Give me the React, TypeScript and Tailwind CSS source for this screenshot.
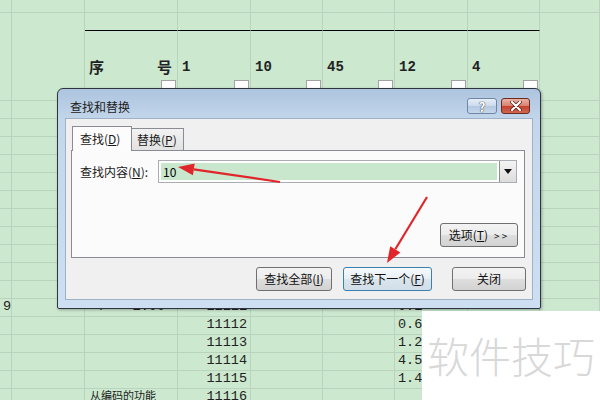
import React from "react";

const cols = [12, 73, 93, 73, 72, 72, 73, 72, 60];

type Row = { h: number; cells?: Record<number, React.ReactNode> };

const num = (t: string) => <span className="block w-full text-right pr-[3px]">{t}</span>;
const left = (t: string) => <span className="block pl-[3px]">{t}</span>;

const rows: Row[] = [
  { h: 13 },
  { h: 18 },
  { h: 70 },
  ...Array.from({ length: 11 }, () => ({ h: 18 })),
  {
    h: 18,
    cells: {
      0: left("9"),
      2: (
        <span className="flex w-full justify-between pl-[12px] pr-[12px]">
          <span>¥</span>
          <span>1.00</span>
        </span>
      ),
      3: num("11111"),
      6: left("0.1"),
    },
  },
  { h: 18, cells: { 3: num("11112"), 6: left("0.6") } },
  { h: 18, cells: { 3: num("11113"), 6: left("1.2") } },
  { h: 18, cells: { 3: num("11114"), 6: left("4.5") } },
  { h: 18, cells: { 3: num("11115"), 6: left("1.4") } },
  { h: 18, cells: { 2: <span className="pl-[5px] text-[11px]">从编码的功能</span>, 3: num("11116") } },
];

const header = ["", "", "", "1", "10", "45", "12", "4", ""];

function Sheet() {
  return (
    <div className="flex flex-col font-['Liberation_Mono','Noto_Sans_CJK_SC',monospace] text-[13.5px] text-[#222]">
      {rows.map((r, ri) => (
        <div key={ri} className="flex shrink-0" style={{ height: r.h }}>
          {cols.map((w, ci) => {
            const inner = ci >= 2 && ci <= 7;
            let bb = "border-b border-b-[#b9d3bc]";
            if (ri === 1) bb = inner ? "border-b border-b-black" : "";
            return (
              <div
                key={ci}
                className={`relative flex shrink-0 items-center border-r border-r-[#b9d3bc] ${bb}`}
                style={{ width: w }}
              >
                {ri === 2 && ci === 2 && (
                  <div className="flex w-full justify-between self-start pl-[4px] pr-[5px] pt-[27px] text-[15px] font-bold leading-[18px] font-['Noto_Sans_CJK_SC',sans-serif]">
                    <span>序</span>
                    <span>号</span>
                  </div>
                )}
                {ri === 2 && ci > 2 && header[ci] && (
                  <div className="self-start pl-[4px] pt-[27px] text-[14px] font-bold leading-[18px]">
                    {header[ci]}
                  </div>
                )}
                {ri === 2 && inner && (
                  <div className="absolute right-[1px] top-[49px] h-[16px] w-[15px] border border-[#a3a3a3] bg-white" />
                )}
                {r.cells?.[ci]}
              </div>
            );
          })}
        </div>
      ))}
    </div>
  );
}

const btn =
  "flex items-center justify-center h-[24px] rounded-[3px] border border-[#707070] bg-[linear-gradient(to_bottom,#f3f3f3,#ececec_50%,#dedede_51%,#d2d2d2)] text-[12px] text-[#111]";

function Dialog() {
  return (
    <div className="absolute left-[57px] top-[88px] flex h-[221px] w-[484px] flex-col rounded-t-[6px] rounded-b-[2px] border border-[#2e3440] bg-[linear-gradient(to_bottom,#adc4df,#c3d6eb_14%,#cddff1)] font-['Noto_Sans_CJK_SC',sans-serif] shadow-[1px_1px_3px_rgba(0,0,0,0.3)]">
      <div className="flex h-[29px] shrink-0 items-start justify-between">
        <span className="pl-[12px] pt-[9px] text-[12px] leading-[18px] text-[#1c1c1c]">查找和替换</span>
        <div className="flex gap-[4px] pr-[10px] pt-[9px]">
          <div className="flex h-[16px] w-[30px] items-center justify-center rounded-[3px] border border-[#6f87a6] bg-[linear-gradient(to_bottom,#e6eef8,#cbdaec_50%,#b3c8e2_51%,#c6d7ec)] text-[13px] font-bold leading-none text-white [text-shadow:0_0_1px_#333,0_0_1px_#333]">
            ?
          </div>
          <div className="flex h-[16px] w-[29px] items-center justify-center rounded-[3px] border border-[#6b2a22] bg-[linear-gradient(to_bottom,#eab2a4,#d9806e_50%,#c4412f_51%,#d0664f)]">
            <svg width="12" height="10" viewBox="0 0 12 10">
              <path d="M2 1 L10 9 M10 1 L2 9" stroke="#5a1e16" strokeWidth="3.6" strokeLinecap="round" />
              <path d="M2 1 L10 9 M10 1 L2 9" stroke="#fff" strokeWidth="2.2" strokeLinecap="round" />
            </svg>
          </div>
        </div>
      </div>
      <div className="mx-[7px] flex h-[182px] shrink-0 flex-col border border-[#9fb1c6] bg-[#f0f0f0] text-[12px] text-[#1a1a1a]">
        <div className="ml-[5px] mr-[7px] mt-[7px] flex flex-col">
          <div className="flex items-end pl-[1px]">
            <div className="relative z-10 -mb-px flex h-[25px] w-[60px] items-center border border-b-0 border-[#898c95] bg-[#fcfcfc] pl-[7px] pb-[1px]">
              查找(<span className="underline">D</span>)
            </div>
            <div className="flex h-[22px] w-[52px] items-center border border-l-0 border-b-0 border-[#898c95] bg-[linear-gradient(to_bottom,#f2f2f2,#e2e2e2)] pl-[5px]">
              替换(<span className="underline">P</span>)
            </div>
          </div>
          <div className="flex h-[108px] flex-col border border-[#898c95] bg-[#fbfbfb]">
            <div className="mt-[9px] flex items-center pl-[8px] pr-[7px]">
              <span className="w-[78px]">
                查找内容(<span className="underline">N</span>):
              </span>
              <div className="flex h-[23px] flex-1 border border-[#abadb3] bg-white p-[2px] pr-0">
                <div className="flex flex-1 items-center bg-[#c9e7cc] pl-[2px] text-[12px] text-black">10</div>
                <div className="-my-[2px] ml-[2px] flex w-[17px] items-center justify-center border-l border-[#8f8f8f] bg-[linear-gradient(to_bottom,#f4f4f4,#dcdcdc)]">
                  <svg width="8" height="5" viewBox="0 0 8 5">
                    <path d="M0 0 H8 L4 5 Z" fill="#111" />
                  </svg>
                </div>
              </div>
            </div>
            <div className="mb-[10px] mt-auto flex justify-end pr-[6px]">
              <div className={`${btn} w-[78px] gap-[6px]`}>
                <span>
                  选项(<span className="underline">T</span>)
                </span>
                <span className="text-[10px] tracking-[2px]">&gt;&gt;</span>
              </div>
            </div>
          </div>
        </div>
        <div className="mt-[9px] flex justify-end pr-[6px]">
          <div className={`${btn} w-[76px]`}>
            查找全部(<span className="underline">I</span>)
          </div>
          <div className="ml-[11px] flex h-[24px] w-[89px] items-center justify-center rounded-[3px] border border-[#3c7fb1] bg-[linear-gradient(to_bottom,#f5f9fc,#e8eff4_50%,#dae5ed_51%,#d2dee8)] text-[12px] text-[#111]">
            查找下一个(<span className="underline">F</span>)
          </div>
          <div className={`${btn} ml-[20px] w-[74px]`}>关闭</div>
        </div>
      </div>
    </div>
  );
}

function Arrows() {
  return (
    <svg className="pointer-events-none absolute left-0 top-0" width="600" height="400" viewBox="0 0 600 400">
      <line x1="280" y1="182" x2="193.8" y2="169.3" stroke="#e0262a" strokeWidth="2.2" />
      <polygon points="178,167 194.7,163.4 192.9,175.2" fill="#e0262a" />
      <line x1="427" y1="197" x2="395.3" y2="249.3" stroke="#e0262a" strokeWidth="2.2" />
      <polygon points="387,263 400.4,252.4 390.2,246.2" fill="#e0262a" />
    </svg>
  );
}

export default function App() {
  return (
    <div className="relative h-[400px] w-[600px] overflow-hidden bg-[#cce8cf]">
      <Sheet />
      <Dialog />
      <Arrows />
      <div className="absolute left-[422px] top-[311px] flex h-[89px] w-[178px] items-start bg-white pl-[5px] pt-[20px]">
        <span className="text-[42px] leading-[48px] font-light text-[#d8d8d8] font-['Noto_Sans_CJK_SC',sans-serif]">
          软件技巧
        </span>
      </div>
    </div>
  );
}
